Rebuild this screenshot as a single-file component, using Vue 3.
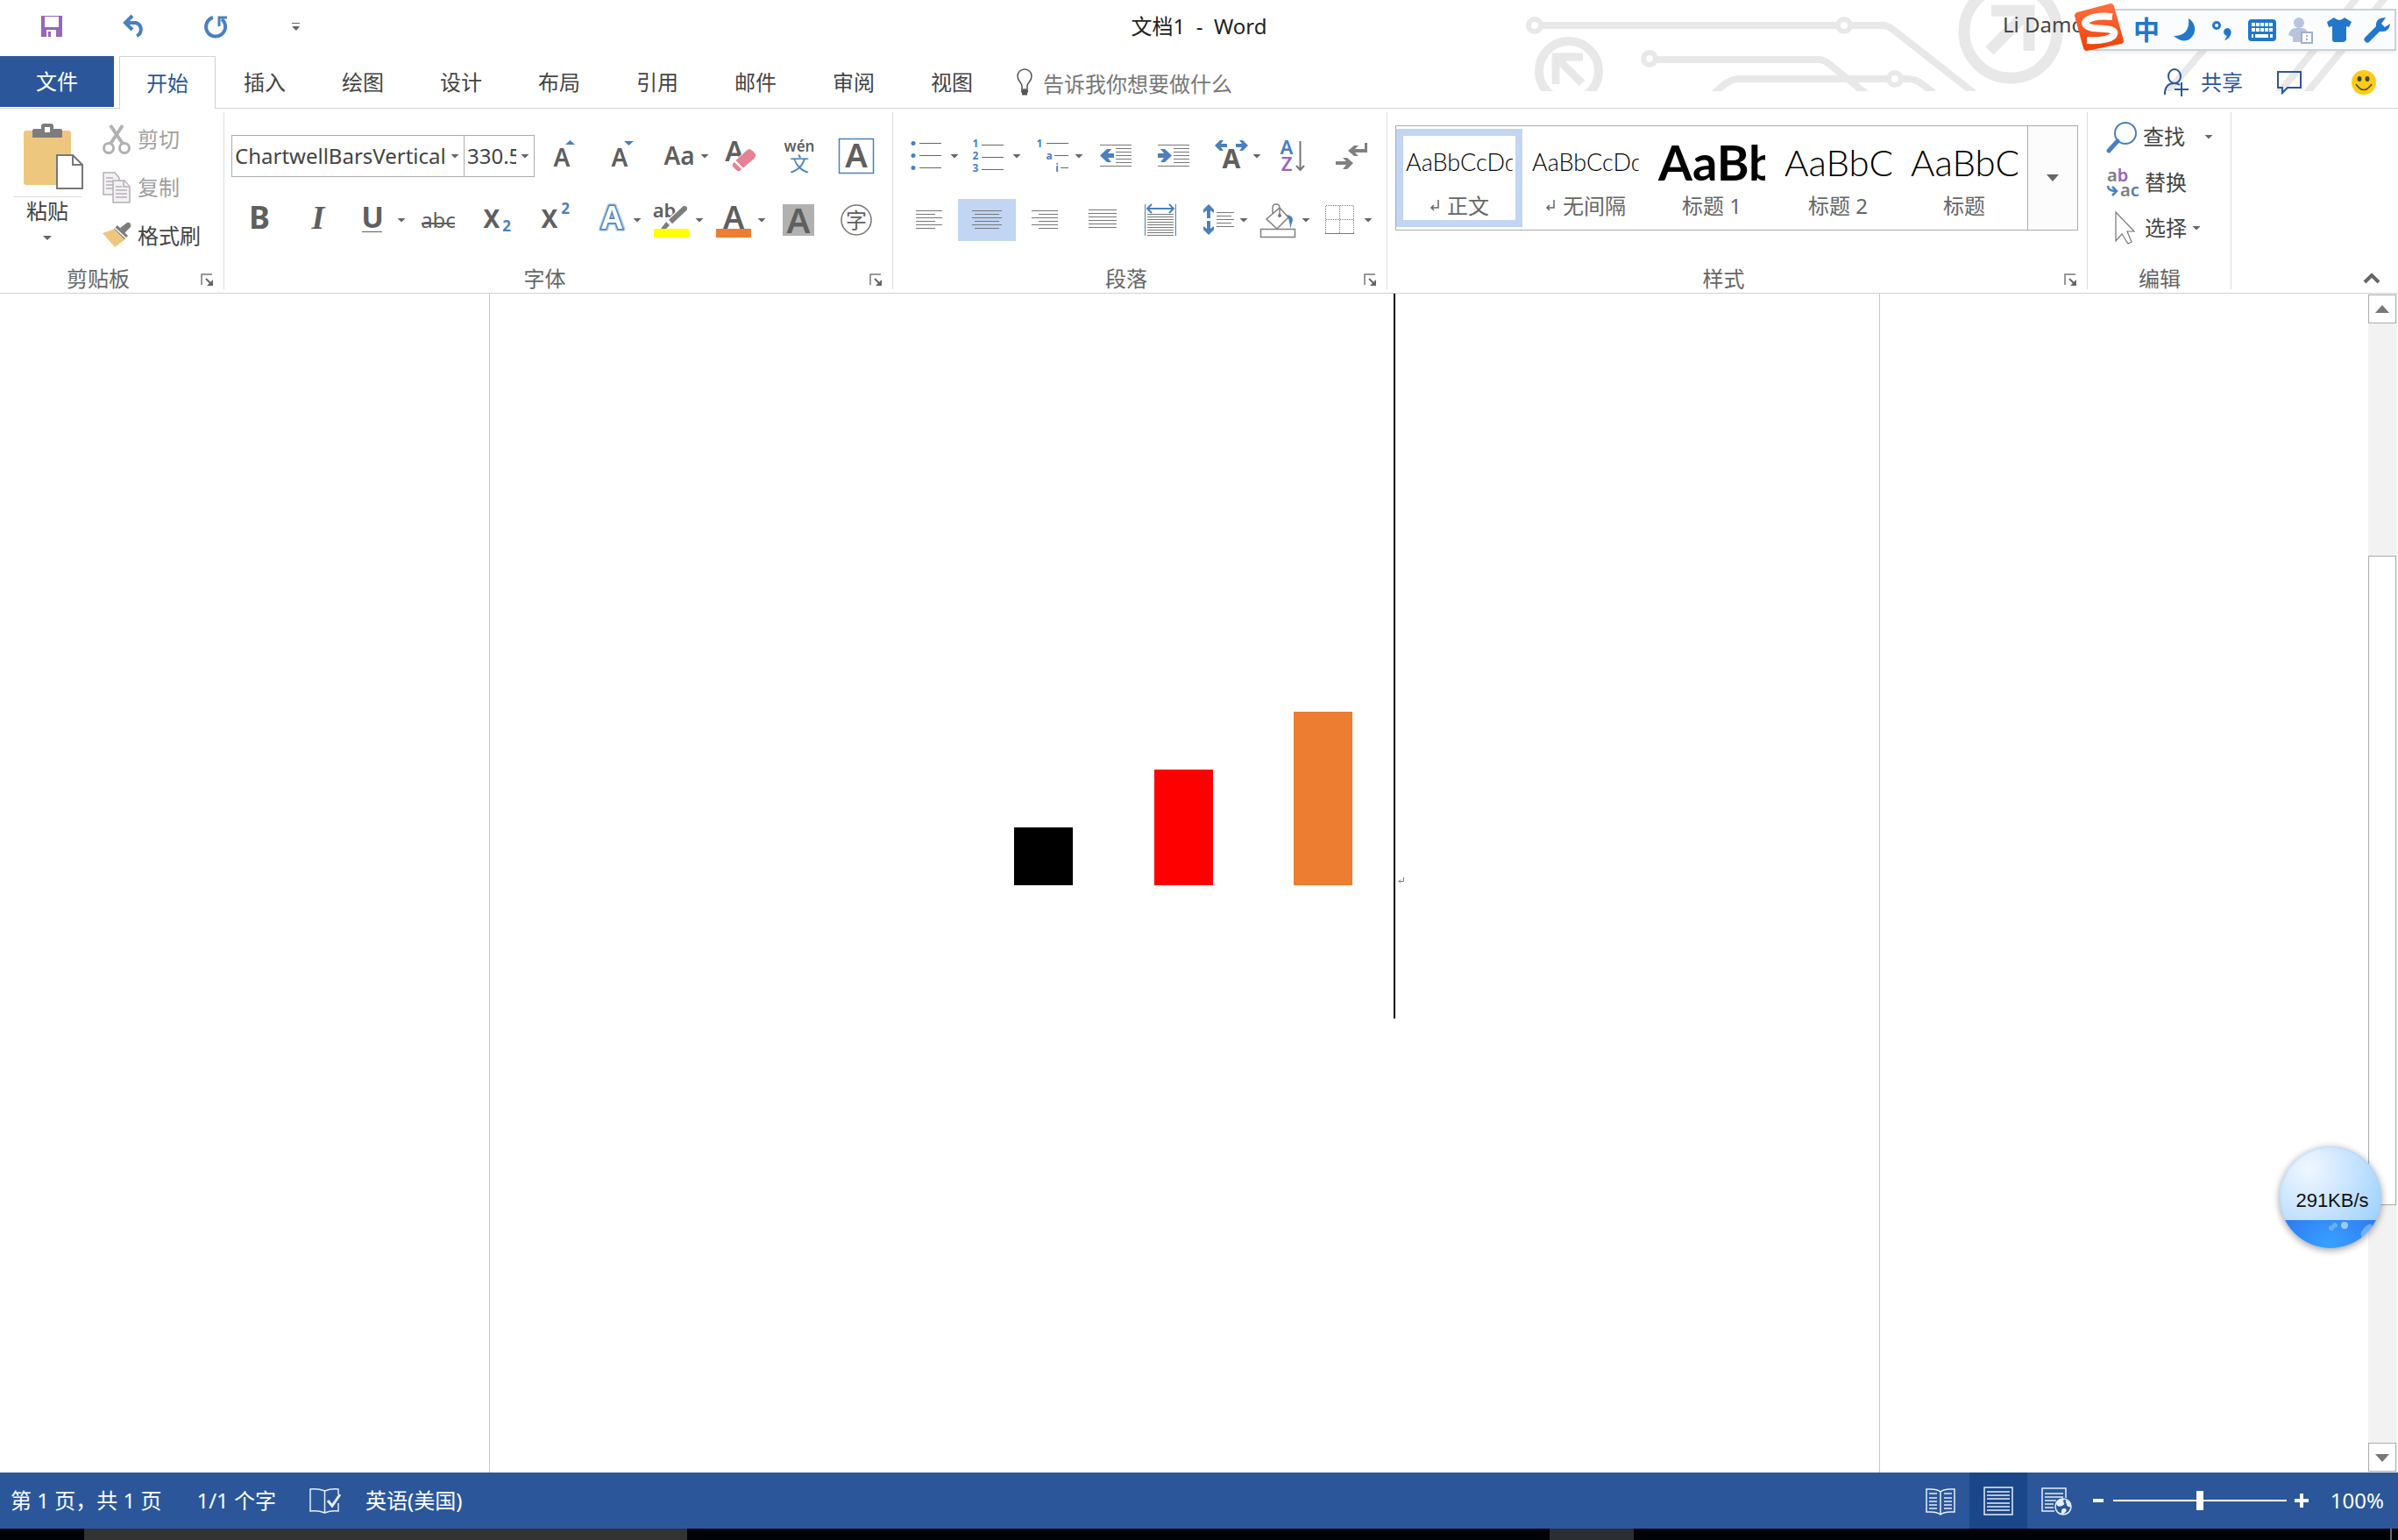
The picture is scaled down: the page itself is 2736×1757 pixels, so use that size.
<template>
  <div class="word-app">
    <header class="window-header">
      <svg class="header-art" viewBox="0 0 996 104" fill="none" stroke="#e8e8e8" stroke-width="8" aria-hidden="true">
        <circle cx="11" cy="29" r="7" stroke-width="6" />
        <path d="M18 29H357M371 29H408Q414 29 420 34L512 106" />
        <circle cx="364" cy="29" r="7" stroke-width="6" />
        <circle cx="50" cy="81" r="34" stroke-width="10" />
        <path d="M35 96V65H66M38 68L65 95" stroke-width="9" />
        <circle cx="142" cy="67" r="7" stroke-width="6" />
        <path d="M149 68H335Q341 68 347 73L388 106" />
        <path d="M216 106L228 96Q236 90 244 90H415M429 90H436Q446 90 453 96L466 106" />
        <circle cx="422" cy="90" r="7" stroke-width="6" />
        <circle cx="554" cy="36" r="53" stroke-width="13" />
        <path d="M532 12H575V58M573 14L530 58" stroke-width="13" />
        <path d="M780 50L732 106M952 -6L860 106M984 -6L892 106" />
      </svg>

      <div class="title-bar">
        <div class="quick-access">
          <button class="plain-btn" aria-label="保存">
            <svg width="28" height="28" viewBox="0 0 28 28"><path d="M2 2h24v24H2z" fill="#9666bb" /><path d="M6 3h16v12H6zM8 18h11v8H8z" fill="#fff" /><path d="M10 20h3v6h-3z" fill="#9666bb" /></svg>
          </button>
          <button class="plain-btn" aria-label="撤消">
            <svg width="28" height="28" viewBox="0 0 28 28" fill="none" stroke="#4a80bd" stroke-width="4"><path d="M3 10H16A8 8 0 0 1 17 25" /><path d="M12 2L4 10L12 18" /></svg>
          </button>
          <button class="plain-btn" aria-label="重复">
            <svg width="28" height="28" viewBox="0 0 28 28" fill="none" stroke="#4a80bd" stroke-width="4"><path d="M10 4A11 11 0 1 0 20 6" /><path d="M26 4H17V14" stroke-width="3" /></svg>
          </button>
          <button class="plain-btn" aria-label="自定义快速访问工具栏">
            <svg width="28" height="28" viewBox="0 0 28 28" fill="#666"><path d="M6 10h9v1H6zM6 14h9l-4 5z" /></svg>
          </button>
        </div>
        <h1 class="doc-title">文档1&nbsp; -&nbsp; Word</h1>
        <span class="user-name">Li Damo</span>
      </div>

      <div class="tab-bar">
        <button class="file-tab">文件</button>
        <nav class="tabs">
          <button
            v-for="tab in tabs"
            :key="tab"
            class="tab"
            :class="{ active: tab === activeTab }"
            @click="activeTab = tab"
          >{{ tab }}</button>
        </nav>
        <label class="tell-me">
          <svg width="24" height="32" viewBox="0 0 24 32" fill="none" stroke="#555" stroke-width="1.5"><path d="M8 24V20C8 16 3 15 3 9A8 8 0 0 1 19 9C19 15 14 16 14 20V24Z" /><path d="M7 26H15M8 29H14" stroke-width="3" /></svg>
          <input type="text" placeholder="告诉我你想要做什么" aria-label="告诉我你想要做什么">
        </label>
        <div class="share-area">
          <button class="share-btn">
            <svg width="32" height="32" viewBox="0 0 32 32" fill="none" stroke="#2b579a" stroke-width="2"><ellipse cx="14" cy="9" rx="7" ry="8" /><path d="M3 30V27Q4 17 14 17Q18 17 20 19M14 24H30M22 16V32" /></svg>
            共享
          </button>
          <button class="plain-btn" aria-label="批注">
            <svg width="30" height="30" viewBox="0 0 30 30" fill="none" stroke="#2b579a" stroke-width="2"><path d="M2 3H28V21H13L7 27V21H2Z" /></svg>
          </button>
          <button class="plain-btn" aria-label="反馈">
            <svg width="28" height="28" viewBox="0 0 28 28"><circle cx="14" cy="14" r="14" fill="#ffcc11" /><ellipse cx="9" cy="10" rx="2.5" ry="3" fill="#444" /><ellipse cx="18" cy="10" rx="2.5" ry="3" fill="#444" /><path d="M5 16Q14 29 23 16" fill="none" stroke="#444" stroke-width="1.5" /></svg>
          </button>
        </div>
      </div>
    </header>

    <section class="ribbon">
      <div class="group">
        <div class="group-body">
          <button class="paste-btn">
            <svg width="78" height="84" viewBox="0 0 78 84"><rect x="12" y="9" width="54" height="62" rx="3" fill="#eec77f" /><path d="M22 17V9Q22 7 24 7H32V4Q32 1 35 1H43Q46 1 46 4V7H54Q56 7 56 9V17Z" fill="#7d7d7d" /><path d="M36 5h6v6h-6z" fill="#fff" /><path d="M50 37H68L79 48V75H50Z" fill="#fff" stroke="#777" stroke-width="2" /><path d="M68 37V48H79" fill="none" stroke="#777" stroke-width="2" /></svg>
            <span class="paste-label">粘贴</span>
            <span class="caret"></span>
          </button>
          <div class="clip-actions">
            <button class="text-btn disabled" disabled>
              <svg width="32" height="38" viewBox="0 0 32 38" fill="none" stroke="#b1b1b1" stroke-width="3"><circle cx="7" cy="29" r="5.5" /><circle cx="25" cy="29" r="5.5" /><path d="M9 24L23 3M23 24L9 3" stroke-width="4" /></svg>
              剪切
            </button>
            <button class="text-btn disabled" disabled>
              <svg width="32" height="38" viewBox="0 0 32 38" fill="#f5f0f7" stroke="#b1b1b1" stroke-width="1.5"><path d="M1 2H14L19 8V27H1Z" /><path d="M4 8H12M4 12H12M4 16H12M4 20H12" /><path d="M12 11H25L31 18V36H12Z" /><path d="M24 11V18H31M15 18H22M15 22H28M15 26H28M15 30H28" /></svg>
              复制
            </button>
            <button class="text-btn">
              <svg width="32" height="38" viewBox="0 0 32 38"><path d="M0 16L14 11L26 23L14 32Z" fill="#eec77f" /><path d="M13 11L17 7L29 19L25 23Z" fill="#7d7d7d" /><path d="M20 10L28 4Q33 3 32 9L25 16Z" fill="#7d7d7d" /><path d="M14 10L27 22" stroke="#fff" stroke-width="1.5" /></svg>
              格式刷
            </button>
          </div>
        </div>
        <footer class="group-footer"><span>剪贴板</span><button class="launcher" aria-label="剪贴板选项"><svg width="16" height="16" viewBox="0 0 16 16" v-html="icons.launcher" /></button></footer>
      </div>

      <div class="group">
        <div class="tool-rows">
          <div class="tool-row">
            <div class="combo font-name">
              <input v-model="fontName" type="text" aria-label="字体">
              <button class="combo-btn" aria-label="选择字体"><span class="caret"></span></button>
            </div>
            <div class="combo font-size">
              <input v-model="fontSize" type="text" aria-label="字号">
              <button class="combo-btn" aria-label="选择字号"><span class="caret"></span></button>
            </div>
            <button v-for="tool in fontTools[0]" :key="tool.icon" class="tool" :class="{ split: tool.menu }" :aria-label="tool.label">
              <svg class="tool-icon" viewBox="0 0 44 48" v-html="icons[tool.icon]" />
              <span v-if="tool.menu" class="caret"></span>
            </button>
          </div>
          <div class="tool-row">
            <button v-for="tool in fontTools[1]" :key="tool.icon" class="tool" :class="{ split: tool.menu }" :aria-label="tool.label">
              <svg class="tool-icon" viewBox="0 0 44 48" v-html="icons[tool.icon]" />
              <span v-if="tool.menu" class="caret"></span>
            </button>
          </div>
        </div>
        <footer class="group-footer"><span>字体</span><button class="launcher" aria-label="字体选项"><svg width="16" height="16" viewBox="0 0 16 16" v-html="icons.launcher" /></button></footer>
      </div>

      <div class="group">
        <div class="tool-rows">
          <div v-for="(row, i) in paragraphTools" :key="i" class="tool-row">
            <button v-for="tool in row" :key="tool.icon" class="tool" :class="{ split: tool.menu, pressed: tool.icon === 'alignCenter' }" :aria-label="tool.label">
              <svg class="tool-icon" viewBox="0 0 44 48" v-html="icons[tool.icon]" />
              <span v-if="tool.menu" class="caret"></span>
            </button>
          </div>
        </div>
        <footer class="group-footer"><span>段落</span><button class="launcher" aria-label="段落选项"><svg width="16" height="16" viewBox="0 0 16 16" v-html="icons.launcher" /></button></footer>
      </div>

      <div class="group">
        <div class="gallery">
          <button
            v-for="item in styles"
            :key="item.name"
            class="style-item"
            :class="{ selected: item.name === activeStyle }"
            @click="activeStyle = item.name"
          >
            <span class="sample" :class="item.kind">{{ item.sample }}</span>
            <span class="style-name">
              <svg v-if="item.mark" width="12" height="14" viewBox="0 0 12 14" fill="none" stroke="#666" stroke-width="1.5"><path d="M10 0V9H2M5 6L2 9L5 12" /></svg>
              {{ item.name }}
            </span>
          </button>
          <button class="gallery-more" aria-label="其他样式"><span class="caret large"></span></button>
        </div>
        <footer class="group-footer"><span>样式</span><button class="launcher" aria-label="样式选项"><svg width="16" height="16" viewBox="0 0 16 16" v-html="icons.launcher" /></button></footer>
      </div>

      <div class="group">
        <div class="edit-actions">
          <button class="text-btn">
            <svg width="36" height="38" viewBox="0 0 36 38" fill="none" stroke="#4a80bd"><circle cx="22" cy="15" r="12" stroke-width="2" /><path d="M13 24L3 35" stroke-width="5" stroke-linecap="round" /></svg>
            查找
            <span class="caret far"></span>
          </button>
          <button class="text-btn">
            <svg width="38" height="38" viewBox="0 0 38 38" font-size="20" font-weight="600"><text x="1" y="18" fill="#7d7d7d">a<tspan fill="#9666bb">b</tspan></text><text x="16" y="35" fill="#7d7d7d">a<tspan fill="#4a80bd">c</tspan></text><path d="M2 23Q2 29 11 29M7 24L12 29L7 34" fill="none" stroke="#4a80bd" stroke-width="2.5" /></svg>
            替换
          </button>
          <button class="text-btn">
            <svg width="38" height="38" viewBox="0 0 38 38" fill="#fff" stroke="#777" stroke-width="1.2"><path d="M11 1V34L18 26L25 37L29 35L24 23H32Z" /></svg>
            选择
            <span class="caret"></span>
          </button>
        </div>
        <footer class="group-footer wide"><span>编辑</span></footer>
      </div>

      <button class="collapse-btn" aria-label="折叠功能区">
        <svg width="20" height="14" viewBox="0 0 20 14" fill="none" stroke="#666" stroke-width="4"><path d="M2 12L10 4L18 12" /></svg>
      </button>
    </section>

    <main class="workspace">
      <article class="page">
        <div class="text-line">
          <div v-for="bar in bars" :key="bar.color" class="bar-cell">
            <div class="bar" :style="{ height: bar.value * 66 + 'px', background: bar.color }"></div>
          </div>
          <svg class="return-mark" width="8" height="8" viewBox="0 0 8 8" fill="none" stroke="#777"><path d="M6.500 0V4.500H1M3 2.500L1 4.500L3 6.500" /></svg>
        </div>
      </article>
      <div class="scrollbar">
        <button class="scroll-btn" aria-label="向上滚动"><svg width="18" height="10" viewBox="0 0 18 10"><path d="M1 9L9 0L17 9Z" fill="#777" /></svg></button>
        <div class="scroll-track">
          <div class="scroll-thumb"></div>
        </div>
        <button class="scroll-btn" aria-label="向下滚动"><svg width="18" height="10" viewBox="0 0 18 10"><path d="M1 1L9 10L17 1Z" fill="#777" /></svg></button>
      </div>
    </main>

    <footer class="status-bar">
      <span>第 1 页，共 1 页</span>
      <span class="word-count">1/1 个字</span>
      <button class="status-btn" aria-label="校对">
        <svg width="36" height="30" viewBox="0 0 36 30" fill="none" stroke="#e8eef7" stroke-width="1.500"><path d="M33 18V27Q25 26 17.500 29Q10 26 1 27V2Q10 1 17.500 4Q25 1 33 2V8M17.500 4V29" /><path d="M21 15L26 21L35 8" stroke-width="3" /></svg>
      </button>
      <span>英语(美国)</span>
      <div class="view-tools">
        <button class="view-btn" aria-label="阅读视图">
          <svg width="36" height="34" viewBox="0 0 36 34" fill="none" stroke="#e8eef7" stroke-width="1.500"><path d="M2 4H7Q14 4 18 7Q22 4 29 4H34V30H29Q22 30 18 33Q14 30 7 30H2ZM18 7V33" /><path d="M5 9H14M5 14H14M5 18H14M5 22H14M5 26H14M22 9H31M22 14H31M22 18H31M22 22H31M22 26H31" /></svg>
        </button>
        <button class="view-btn current" aria-label="页面视图">
          <svg width="36" height="34" viewBox="0 0 36 34" fill="none" stroke="#e8eef7" stroke-width="1.500"><path d="M2 2H34V33H2ZM5 7H31M5 11H31M5 15H31M5 20H31M5 24H31M5 28H31" /></svg>
        </button>
        <button class="view-btn" aria-label="Web 版式视图">
          <svg width="36" height="34" viewBox="0 0 36 34" fill="none" stroke="#e8eef7" stroke-width="1.500"><path d="M16 29H2V3H29V14M5 9H26M5 13H26M5 17H18M5 21H15M5 25H15" /><circle cx="26" cy="24" r="9" fill="#2b579a" /><path d="M18 20Q20 15 26 15Q25 19 27 21Q24 24 20 23ZM25 27Q30 25 29 29Q27 33 24 32ZM29 17Q34 19 34 24L31 23Z" fill="#e8eef7" stroke-width="1" /></svg>
        </button>
        <button class="zoom-btn zoom-out" aria-label="缩小"><svg width="18" height="18" viewBox="0 0 18 18"><path d="M3 7h12v4H3z" fill="#fff" /></svg></button>
        <input v-model="zoom" class="zoom-slider" type="range" min="0" max="200" aria-label="显示比例">
        <button class="zoom-btn" aria-label="放大"><svg width="18" height="18" viewBox="0 0 18 18"><path d="M1 7h6V1h4v6h6v4h-6v6H7v-6H1z" fill="#fff" /></svg></button>
        <span class="zoom-value">{{ zoom }}%</span>
      </div>
    </footer>

    <div class="taskbar-edge">
      <span class="edge-search"></span>
      <span class="edge-task"></span>
      <span class="edge-desktop"></span>
    </div>

    <div class="ime-bar">
      <svg class="ime-logo" viewBox="0 0 58 56">
        <defs><linearGradient id="imeRed" x1="0" y1="0" x2="0" y2="1"><stop offset="0" stop-color="#ff7040" /><stop offset="1" stop-color="#f04006" /></linearGradient></defs>
        <path d="M4 10L42 0Q45 0 46 3L57 42Q57 45 54 46L15 54Q12 54 11 51L1 14Q1 11 4 10Z" fill="url(#imeRed)" />
        <path d="M44 15Q24 13 15 19Q9 25 22 28L36 29Q50 30 45 37Q38 43 15 42" fill="none" stroke="#fff" stroke-width="8" />
      </svg>
      <button v-for="item in imeTools" :key="item.icon" class="ime-btn" :aria-label="item.label">
        <svg width="34" height="32" viewBox="0 0 34 32" v-html="icons[item.icon]" />
      </button>
    </div>

    <div class="speed-ball">
      <span class="speed-water">
        <svg width="116" height="34" viewBox="0 0 116 34" fill="#9ccaff"><circle cx="59" cy="9" r="3" opacity="0.5" /><circle cx="63" cy="6" r="3" opacity="0.5" /><circle cx="74" cy="6" r="4" /><ellipse cx="99" cy="12" rx="9" ry="4" transform="rotate(-50 99 12)" opacity="0.6" /></svg>
      </span>
      <span class="speed-text">291KB/s</span>
    </div>
  </div>
</template>

<script setup>
import { ref } from 'vue'

const tabs = ['开始', '插入', '绘图', '设计', '布局', '引用', '邮件', '审阅', '视图']
const activeTab = ref('开始')
const fontName = ref('ChartwellBarsVertical')
const fontSize = ref('330.5')
const activeStyle = ref('正文')
const zoom = ref(100)

const bars = [
  { value: 1, color: '#000000' },
  { value: 2, color: '#ff0000' },
  { value: 3, color: '#ed7d31' }
]

const styles = [
  { name: '正文', sample: 'AaBbCcDd', kind: 'body', mark: true },
  { name: '无间隔', sample: 'AaBbCcDd', kind: 'body', mark: true },
  { name: '标题 1', sample: 'AaBb', kind: 'heading' },
  { name: '标题 2', sample: 'AaBbC', kind: 'title' },
  { name: '标题', sample: 'AaBbC', kind: 'title' }
]

const fontTools = [
  [
    { icon: 'grow', label: '增大字号' },
    { icon: 'shrink', label: '减小字号' },
    { icon: 'changeCase', label: '更改大小写', menu: true },
    { icon: 'clear', label: '清除所有格式' },
    { icon: 'pinyin', label: '拼音指南' },
    { icon: 'charBorder', label: '字符边框' }
  ],
  [
    { icon: 'bold', label: '加粗' },
    { icon: 'italic', label: '倾斜' },
    { icon: 'underline', label: '下划线', menu: true },
    { icon: 'strike', label: '删除线' },
    { icon: 'sub', label: '下标' },
    { icon: 'sup', label: '上标' },
    { icon: 'effects', label: '文本效果', menu: true },
    { icon: 'highlight', label: '突出显示', menu: true },
    { icon: 'fontColor', label: '字体颜色', menu: true },
    { icon: 'charShade', label: '字符底纹' },
    { icon: 'enclose', label: '带圈字符' }
  ]
]

const paragraphTools = [
  [
    { icon: 'bullets', label: '项目符号', menu: true },
    { icon: 'numbering', label: '编号', menu: true },
    { icon: 'multilevel', label: '多级列表', menu: true },
    { icon: 'outdent', label: '减少缩进量' },
    { icon: 'indent', label: '增加缩进量' },
    { icon: 'asian', label: '中文版式', menu: true },
    { icon: 'sort', label: '排序' },
    { icon: 'marks', label: '显示编辑标记' }
  ],
  [
    { icon: 'alignLeft', label: '左对齐' },
    { icon: 'alignCenter', label: '居中' },
    { icon: 'alignRight', label: '右对齐' },
    { icon: 'justify', label: '两端对齐' },
    { icon: 'distribute', label: '分散对齐' },
    { icon: 'spacing', label: '行和段落间距', menu: true },
    { icon: 'shading', label: '底纹', menu: true },
    { icon: 'borders', label: '边框', menu: true }
  ]
]

const imeTools = [
  { icon: 'imeZhong', label: '中文' },
  { icon: 'imeMoon', label: '半角' },
  { icon: 'imePunct', label: '标点' },
  { icon: 'imeKeyboard', label: '软键盘' },
  { icon: 'imeUser', label: '登录' },
  { icon: 'imeSkin', label: '皮肤' },
  { icon: 'imeTools', label: '工具箱' }
]

// horizontal strokes: [x1, x2, y]
const lines = (list, color = '#777') =>
  `<path d="${list.map(([a, b, y]) => `M${a} ${y}H${b}`).join('')}" stroke="${color}" stroke-width="1" fill="none"/>`

const rows = (a, b, c, d, start = 13.5) =>
  lines([0, 1, 2, 3, 4, 5].map((i) => (i % 2 ? [c, d, start + i * 4] : [a, b, start + i * 4])))

const letter = (char, x, y, size, extra = 'font-weight="600"', color = '#5f5f5f') =>
  `<text x="${x}" y="${y}" font-size="${size}" text-anchor="middle" fill="${color}" ${extra}>${char}</text>`

const blue = '#4a80bd'
const bold = 'font-weight="700"'

const icons = {
  launcher: '<path d="M1 13V1H13" fill="none" stroke="#777" stroke-width="1.500"/><path d="M6 6L12 12" stroke="#666" stroke-width="2"/><path d="M14 7V14H7Z" fill="#666"/>',

  grow: letter('A', 20, 36, 28) + `<path d="M24 11L29.500 6L35 11Z" fill="${blue}"/>`,
  shrink: letter('A', 20, 36, 28) + `<path d="M25 7L30.500 12L36 7Z" fill="${blue}"/>`,
  changeCase: letter('Aa', 27, 34, 28),
  clear: letter('A', 14, 30, 32) +
    '<path d="M15 29L28 17Q31 14 34 17L38 21Q40 24 37 27L24 38Z" fill="#e58295" stroke="#fff" stroke-width="1"/><path d="M14 31L22 39L20 41Q18 42 16 40L12 36Q11 33 14 31Z" fill="#e58295"/>',
  pinyin: letter('wén', 22, 19, 17) + letter('文', 22, 41, 22, '', blue),
  charBorder: `<rect x="1.500" y="4.500" width="39" height="39" fill="none" stroke="${blue}" stroke-width="1.500"/>` + letter('A', 21, 37, 38),

  bold: letter('B', 21, 34, 36, bold),
  italic: letter('I', 22, 34, 38, 'font-weight="700" font-style="italic" font-family="Liberation Serif, serif"'),
  underline: letter('U', 23, 33, 34, bold) + '<path d="M11 37.500H34" stroke="#5f5f5f"/>',
  strike: letter('abc', 22, 33, 24, '') + '<path d="M3 28H41" stroke="#5f5f5f" stroke-width="2"/>',
  sub: letter('X', 17, 33, 28, bold) + letter('2', 34, 37, 17, bold, blue),
  sup: letter('X', 17, 33, 28, bold) + letter('2', 35, 17, 17, bold, blue),
  effects: letter('A', 27, 34, 36, 'font-weight="600" stroke="#b9d3f2" stroke-width="6" stroke-linejoin="round"', '#b9d3f2') +
    letter('A', 27, 34, 36, `font-weight="600" stroke="${blue}" stroke-width="3" paint-order="stroke"`, '#fff'),
  highlight: letter('ab', 16, 21, 22) +
    '<path d="M23 26L39 11" stroke="#fff" stroke-width="9"/><path d="M23 26L39 11" stroke="#7d7d7d" stroke-width="6"/><circle cx="39" cy="11" r="3" fill="#7d7d7d"/><path d="M12 34L18 26L22 30L18 34Z" fill="#7d7d7d"/><path d="M4 34H44V44H4Z" fill="#ff0"/>',
  fontColor: letter('A', 24, 34, 36) + '<path d="M4 34H44V44H4Z" fill="#ed7d31"/>',
  charShade: '<path d="M4 6H40V42H4Z" fill="#b1b1b1"/>' + letter('A', 22, 39, 40),
  enclose: '<circle cx="22" cy="24" r="17" fill="none" stroke="#777" stroke-width="1.500"/>' + letter('字', 22, 33, 24, ''),

  bullets: [9.5, 23.5, 37.5].map((y) => `<circle cx="9" cy="${y}" r="2.500" fill="${blue}"/>`).join('') +
    lines([[16, 41, 9.5], [16, 41, 23.5], [16, 41, 37.5]], '#666'),
  numbering: letter('1', 9, 14, 12, bold, blue) + letter('2', 9, 28, 12, bold, blue) + letter('3', 9, 42, 12, bold, blue) +
    lines([[16, 41, 11.5], [16, 41, 25.5], [16, 41, 39.5]], '#666'),
  multilevel: letter('1', 11, 14, 12, bold, blue) + letter('a', 22, 28, 12, bold, blue) + letter('i', 31, 42, 12, bold, blue) +
    lines([[19, 44, 9.5], [28, 44, 23.5], [35, 44, 37.5]], '#666'),
  outdent: lines([[4, 40, 11.5], [22, 40, 15.5], [22, 40, 19.5], [22, 40, 23.5], [22, 40, 27.5], [22, 40, 31.5], [4, 40, 35.5]]) +
    `<path d="M4 23.500L12 16H17L13 21H20V26H13L17 31H12Z" fill="${blue}"/>`,
  indent: lines([[4, 40, 11.5], [22, 40, 15.5], [22, 40, 19.5], [22, 40, 23.5], [22, 40, 27.5], [22, 40, 31.5], [4, 40, 35.5]]) +
    `<path d="M20 23.500L12 16H7L11 21H4V26H11L7 31H12Z" fill="${blue}"/>`,
  asian: letter('A', 27, 38, 30, bold) +
    `<path d="M8 12L14 6H18L15 10H22V14H15L18 18H14ZM46 12L40 6H36L39 10H32V14H39L36 18H40Z" fill="${blue}"/>`,
  sort: letter('A', 14, 22, 22, 'font-weight="600"', blue) + letter('Z', 14, 41, 22, 'font-weight="600"', '#9666bb') +
    '<path d="M29.500 7V40M25 35L29.500 40L34 35" fill="none" stroke="#777" stroke-width="2"/>',
  marks: '<g fill="#808080"><path d="M37 9H40V20H26L30 24H25L18 18L25 12H30L26 16H37Z"/><path d="M4 30H16L12 26H17L24 32L17 39H12L16 34H4Z"/></g>',

  alignLeft: rows(7, 37, 7, 29),
  alignCenter: rows(5, 39, 8, 36),
  alignRight: rows(7, 37, 15, 37),
  justify: rows(6, 38, 6, 38, 12.5),
  distribute: lines([17, 20, 23, 26, 29, 32, 35, 38, 41].map((y) => [7, 37, y + 0.5])) +
    `<path d="M4.500 6V42M39.500 6V42" stroke="${blue}"/><path d="M7 11H37M12 6L7 11L12 16M32 6L37 11L32 16" fill="none" stroke="${blue}" stroke-width="2"/>`,
  spacing: lines([[25, 45, 15.5], [25, 42, 19.5], [25, 45, 23.5], [25, 42, 27.5], [25, 45, 31.5]]) +
    `<path d="M16 6L22 12V16L18 13V22H14V13L10 16V12ZM16 41L22 35V31L18 34V25H14V34L10 31V35Z" fill="${blue}"/>`,
  shading: '<g fill="none" stroke="#808080" stroke-width="1.500"><path d="M26 10L11 23L23 34L36 21ZM18 17V10Q18 6 22 6Q26 6 26 10V19"/><path d="M4.500 34.500H43.500V43.500H4.500Z"/></g><circle cx="26" cy="19" r="2" fill="#777"/>' +
    `<path d="M34 18Q41 19 41 24L38 34Q38 25 34 18Z" fill="${blue}"/>`,
  borders: '<path d="M7.500 39V7.500H39.500V39M23.500 8V39M8 23.500H39" fill="none" stroke="#777" stroke-dasharray="1 1"/><path d="M7 39.500H40" stroke="#777"/>',

  imeZhong: letter('中', 17, 27, 30, bold, '#2277cc'),
  imeMoon: '<path d="M21 3Q31 10 27 21Q19 35 4 23Q23 23 21 3Z" fill="#2277cc"/>',
  imePunct: '<circle cx="9" cy="11" r="3.500" fill="none" stroke="#2277cc" stroke-width="3"/><path d="M17 18Q18 14 22 14Q27 16 25 22Q23 27 18 28L21 23Q17 22 17 18Z" fill="#2277cc"/>',
  imeKeyboard: '<rect x="1" y="4" width="32" height="25" rx="4" fill="#2277cc"/><path d="M5 10H29M5 16H29" stroke="#fff" stroke-width="4" stroke-dasharray="4 1"/><path d="M5 23H7M9 23H24M26 23H29" stroke="#fff" stroke-width="4"/>',
  imeUser: '<circle cx="15" cy="8" r="6" fill="#b7c4dc"/><path d="M3 22Q5 14 11 14H19Q25 15 26 22V30H8V24Z" fill="#b7c4dc"/><rect x="18" y="19" width="12" height="12" fill="#fff" stroke="#9fb0cf" stroke-width="2"/><path d="M23 22h2v2h-2zM23 26h2v2h-2z" fill="#9fb0cf"/>',
  imeSkin: '<path d="M3 7L11 2Q17 8 23 2L31 7L28 13L25 12V27Q24 30 21 30H12Q9 30 9 27V12L5 13Z" fill="#2277cc"/>',
  imeTools: '<path d="M5 27L18 14" stroke="#2277cc" stroke-width="7" stroke-linecap="round"/><path d="M26 2Q16 2 15 9Q14 16 20 18Q30 19 31 9L25 13L21 9Z" fill="#2277cc"/>'
}
</script>

<style>
html,
body {
  margin: 0;
  background: #fff;
}
</style>

<style scoped>
.word-app {
  position: relative;
  display: flex;
  flex-direction: column;
  min-height: 100vh;
  overflow: hidden;
  background: #fff;
  color: #444;
  font-family: 'Noto Sans', 'Noto Sans CJK SC', sans-serif;
  font-size: 24px;
  line-height: 32px;
}

button,
input {
  margin: 0;
  padding: 0;
  border: none;
  background: none;
  color: inherit;
  font: inherit;
}

button {
  display: flex;
  align-items: center;
  justify-content: center;
  white-space: nowrap;
}

svg {
  display: block;
  flex: none;
  overflow: visible;
}

.caret {
  flex: none;
  width: 10px;
  height: 5px;
  background: #666;
  clip-path: polygon(0 0, 100% 0, 50% 100%);
}

.caret.large {
  width: 14px;
  height: 8px;
}

/* header */
.window-header {
  position: relative;
}

.header-art {
  position: absolute;
  top: 0;
  right: 0;
  width: 996px;
  height: 104px;
  overflow: hidden;
}

.title-bar {
  position: relative;
  display: grid;
  grid-template-columns: 1fr auto 1fr;
  align-items: center;
  height: 64px;
}

.quick-access {
  display: flex;
  gap: 66px;
  padding: 0 0 4px 45px;
}

.doc-title {
  margin: 0;
  padding-bottom: 4px;
  color: #222;
  font-size: 24px;
  font-weight: 400;
}

.user-name {
  justify-self: end;
  padding: 0 358px 8px 0;
}

.tab-bar {
  position: relative;
  display: flex;
  height: 59px;
  border-bottom: 1px solid #d2d2d2;
}

.file-tab {
  width: 130px;
  height: 58px;
  background: #2b579a;
  color: #fff;
}

.tabs {
  display: flex;
  margin-left: 6px;
}

.tab {
  width: 112px;
  height: 60px;
}

.tab.active {
  width: 110px;
  border: 1px solid #d2d2d2;
  border-bottom: none;
  background: #fff;
  color: #2b579a;
}

.tell-me {
  display: flex;
  align-items: center;
  gap: 8px;
  margin-left: 16px;
}

.tell-me input {
  width: 280px;
  padding-top: 4px;
  outline: none;
}

.tell-me input::placeholder {
  color: #777;
  opacity: 1;
}

.share-area {
  display: flex;
  gap: 38px;
  margin-left: auto;
  padding-right: 25px;
}

.share-area .plain-btn:last-child {
  margin-left: 18px;
}

.share-btn {
  gap: 12px;
  color: #2b579a;
}

/* ribbon */
.ribbon {
  display: flex;
  height: 210px;
  border-bottom: 1px solid #d2d2d2;
}

.group {
  position: relative;
  display: flex;
  flex-direction: column;
  justify-content: space-between;
  flex: none;
}

.group::after {
  content: '';
  position: absolute;
  top: 4px;
  right: 0;
  bottom: 4px;
  width: 1px;
  background: #dcdcdc;
}

.group-footer {
  position: relative;
  display: flex;
  justify-content: center;
  height: 32px;
  padding-right: 32px;
  color: #666;
}

.group-footer.wide {
  padding-right: 0;
}

.launcher {
  position: absolute;
  right: 11px;
  top: 10px;
}

.group-body {
  display: flex;
}

.paste-btn {
  flex-direction: column;
  justify-content: flex-start;
  width: 78px;
  margin: 16px 0 0 15px;
}

.paste-label {
  align-self: stretch;
  margin-bottom: 12px;
  border-top: 1px solid #dcdcdc;
}

.clip-actions,
.edit-actions {
  display: flex;
  flex-direction: column;
  align-items: flex-start;
}

.clip-actions {
  gap: 17px;
  margin: 16px 27px 0 24px;
}

.text-btn {
  gap: 8px;
  height: 38px;
}

.text-btn.disabled {
  color: #a0a0a0;
}

.tool-rows {
  display: flex;
  flex-direction: column;
  gap: 25px;
  padding: 30px 8px 0;
}

.tool-row {
  display: flex;
}

.combo {
  display: flex;
  box-sizing: border-box;
  height: 48px;
  border: 1px solid #ababab;
}

.combo input {
  flex: 1;
  min-width: 0;
  padding-left: 3px;
  outline: none;
}

.combo-btn {
  width: 20px;
}

.font-name {
  width: 266px;
}

.font-size {
  width: 81px;
  margin-left: -1px;
}

.tool {
  width: 66px;
  height: 48px;
}

.tool.split {
  justify-content: flex-start;
  gap: 7px;
  width: 71px;
  padding-left: 6px;
}

.tool.pressed {
  background: #c2d5f2;
}

.tool-icon {
  width: 44px;
  height: 48px;
}

.gallery {
  display: flex;
  box-sizing: border-box;
  height: 120px;
  margin: 19px 11px 0 9px;
  border: 1px solid #ababab;
}

.style-item {
  box-sizing: border-box;
  flex-direction: column;
  justify-content: flex-end;
  width: 144px;
  height: 112px;
  margin-top: 3px;
  border: 8px solid transparent;
}

.style-item.selected {
  border-color: #c2d5f2;
}

.sample {
  width: 122px;
  margin-bottom: 6px;
  overflow: hidden;
  color: #000;
  font-family: Lato, 'Noto Sans', sans-serif;
  font-weight: 300;
  line-height: 56px;
  text-align: left;
}

.sample.body {
  font-size: 27px;
}

.sample.heading {
  font-size: 56px;
  font-weight: 700;
}

.sample.title {
  font-size: 42px;
}

.style-name {
  display: flex;
  align-items: center;
  gap: 8px;
  color: #666;
}

.gallery-more {
  width: 57px;
  border-left: 1px solid #ababab;
  background: #fcfcfc;
}

.edit-actions {
  gap: 14px;
  padding: 13px 21px 0 21px;
}

.edit-actions .text-btn {
  gap: 6px;
}

.caret.far {
  margin-left: 16px;
}

.collapse-btn {
  align-self: flex-end;
  margin: 0 20px 10px auto;
}

/* document */
.workspace {
  display: flex;
  flex: 1;
}

.page {
  box-sizing: border-box;
  width: 1587px;
  margin: 0 auto;
  border: solid #c6c6c6;
  border-width: 0 1px;
}

.text-line {
  position: relative;
  display: flex;
  align-items: flex-end;
  box-sizing: border-box;
  width: 481px;
  height: 827px;
  margin: 0 auto;
  padding-bottom: 152px;
  border-right: 2px solid #000;
}

.bar-cell {
  display: flex;
  justify-content: center;
  width: 160px;
}

.bar {
  width: 67px;
}

.return-mark {
  position: absolute;
  right: -13px;
  bottom: 153px;
}

.scrollbar {
  display: flex;
  flex-direction: column;
  width: 32px;
  padding: 1px 1px 1px 0;
  border-right: 1px solid #fff;
  background: #f2f2f2;
}

.scroll-btn {
  height: 33px;
  border: 1px solid #ababab;
  background: #fff;
}

.scroll-track {
  display: flex;
  flex: 1;
  flex-direction: column;
}

.scroll-track::before {
  content: '';
  flex: 266;
}

.scroll-track::after {
  content: '';
  flex: 272;
}

.scroll-thumb {
  flex: 741;
  border: 1px solid #ababab;
  background: #fff;
}

/* status bar */
.status-bar {
  display: flex;
  align-items: center;
  height: 64px;
  padding: 0 16px 0 12px;
  background: #2b579a;
  color: #fff;
}

.word-count {
  margin-left: 40px;
}

.status-btn {
  margin: 0 28px 0 38px;
}

.view-tools {
  display: flex;
  align-items: center;
  align-self: stretch;
  margin-left: auto;
}

.view-btn {
  align-self: stretch;
  width: 66px;
}

.view-btn.current {
  background: #19478a;
}

.zoom-btn {
  width: 18px;
}

.zoom-out {
  margin-left: 6px;
}

.zoom-slider {
  width: 198px;
  height: 22px;
  margin: 0 8px;
  appearance: none;
  background: linear-gradient(#fff, #fff) center / 100% 2px no-repeat;
}

.zoom-slider::-webkit-slider-thumb {
  appearance: none;
  width: 8px;
  height: 22px;
  background: #fff;
}

.zoom-value {
  margin-left: 24px;
}

.taskbar-edge {
  display: flex;
  height: 13px;
  background: #000308;
}

.edge-search {
  width: 688px;
  margin-left: 96px;
  background: #333;
}

.edge-task {
  width: 96px;
  margin-left: 984px;
  background: #2b2e33;
}

.edge-desktop {
  width: 2px;
  margin: 0 7px 0 auto;
  background: #666;
}

/* floating widgets */
.ime-bar {
  position: absolute;
  top: 10px;
  right: 2px;
  display: flex;
  align-items: center;
  gap: 10px;
  box-sizing: border-box;
  height: 48px;
  padding: 0 2px 0 44px;
  border: 2px solid #c3d3e0;
  background: #fbfcfe;
  box-shadow: 0 3px 4px rgba(0, 0, 0, 0.06);
}

.ime-logo {
  position: absolute;
  top: -8px;
  left: -22px;
  width: 58px;
  height: 56px;
}

.speed-ball {
  position: absolute;
  right: 19px;
  bottom: 333px;
  width: 116px;
  height: 116px;
  overflow: hidden;
  border-radius: 50%;
  background: radial-gradient(circle at 28% 22%, #f0f7ff 0, #c4e2ff 45%, #86c8fe 100%);
  box-shadow: 0 2px 9px rgba(0, 0, 0, 0.4), inset 0 0 3px #9cc8ff;
}

.speed-water {
  position: absolute;
  right: 0;
  bottom: 0;
  left: 0;
  height: 32px;
  background: radial-gradient(circle at 50% 100%, #37a3ff 0, #2f76ee 100%);
}

.speed-text {
  position: absolute;
  top: 46px;
  right: 0;
  left: 4px;
  color: #111;
  font-family: 'Liberation Sans', sans-serif;
  font-size: 22px;
  text-align: center;
}
</style>
